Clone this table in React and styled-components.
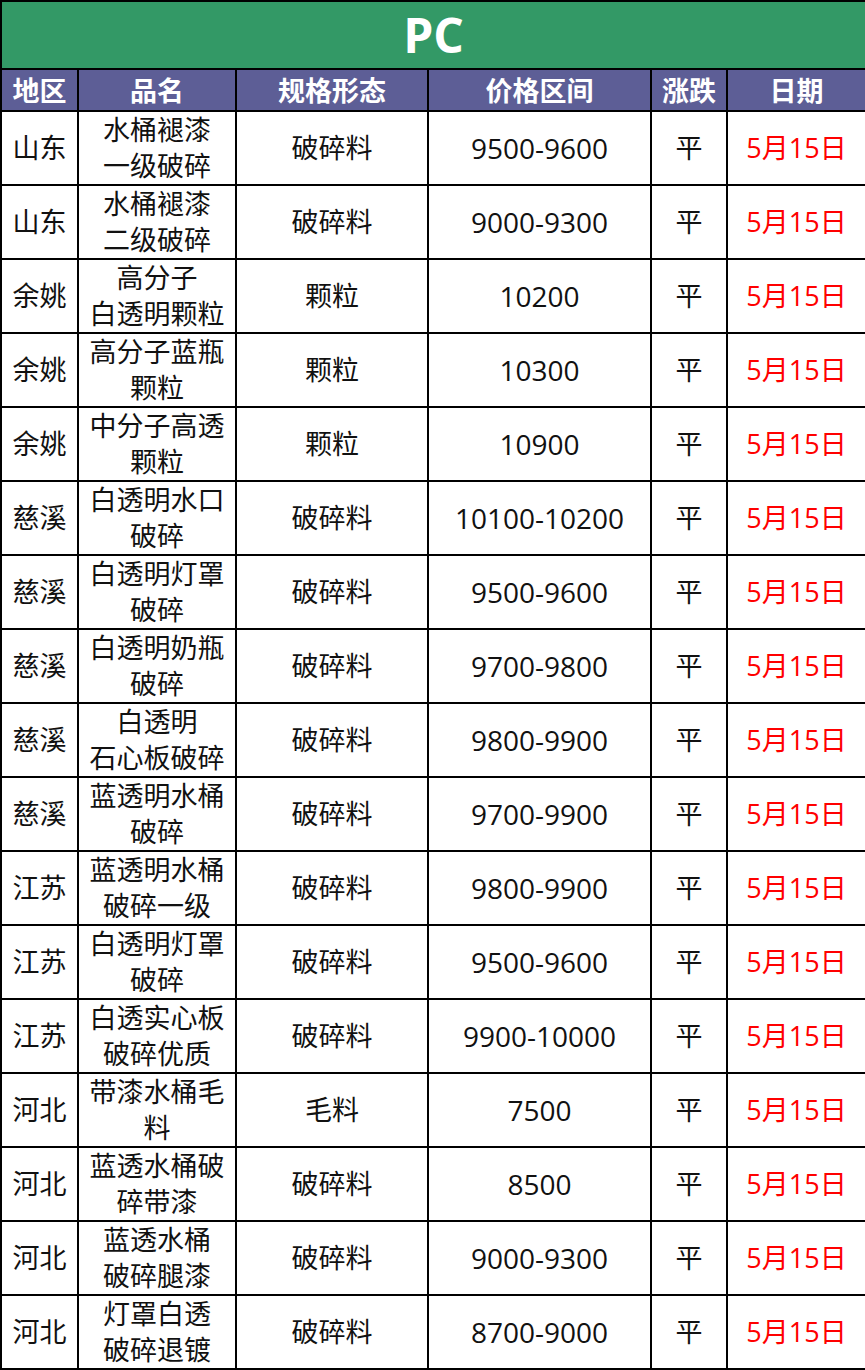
import React from "react";
import styled, { createGlobalStyle } from "styled-components";

const Global = createGlobalStyle`
  html, body { margin: 0; padding: 0; background: #ffffff; }
  body { font-family: "Open Sans", "Noto Sans CJK SC", sans-serif; }
`;

const Table = styled.table`
  width: 865px;
  table-layout: fixed;
  border-collapse: collapse;
  font-family: "Open Sans", "Noto Sans CJK SC", sans-serif;
`;

const Col = styled.col`
  width: ${(p) => p.$w}px;
`;

const TitleCell = styled.th`
  height: 66px;
  padding: 0;
  background: #339966;
  color: #ffffff;
  font-size: 48px;
  font-weight: 700;
  line-height: 1;
  text-align: center;
  border: 2px solid #000;
`;

const HeadCell = styled.th`
  height: 40px;
  padding: 0;
  background: #5d5e96;
  color: #ffffff;
  font-size: 27px;
  font-weight: 700;
  line-height: 1;
  text-align: center;
  border: 2px solid #000;
`;

const Cell = styled.td`
  height: 72px;
  padding: 0;
  color: ${(p) => (p.$red ? "#ff0000" : "#111111")};
  font-size: 27px;
  line-height: 36px;
  text-align: center;
  vertical-align: middle;
  border: 2px solid #000;
  white-space: nowrap;
  overflow: hidden;
`;

const Num = styled.span`
  font-size: 28px;
`;

const Line = styled.span`
  display: block;
`;

const rows = [
  ["山东", ["水桶褪漆", "一级破碎"], "破碎料", "9500-9600"],
  ["山东", ["水桶褪漆", "二级破碎"], "破碎料", "9000-9300"],
  ["余姚", ["高分子", "白透明颗粒"], "颗粒", "10200"],
  ["余姚", ["高分子蓝瓶", "颗粒"], "颗粒", "10300"],
  ["余姚", ["中分子高透", "颗粒"], "颗粒", "10900"],
  ["慈溪", ["白透明水口", "破碎"], "破碎料", "10100-10200"],
  ["慈溪", ["白透明灯罩", "破碎"], "破碎料", "9500-9600"],
  ["慈溪", ["白透明奶瓶", "破碎"], "破碎料", "9700-9800"],
  ["慈溪", ["白透明", "石心板破碎"], "破碎料", "9800-9900"],
  ["慈溪", ["蓝透明水桶", "破碎"], "破碎料", "9700-9900"],
  ["江苏", ["蓝透明水桶", "破碎一级"], "破碎料", "9800-9900"],
  ["江苏", ["白透明灯罩", "破碎"], "破碎料", "9500-9600"],
  ["江苏", ["白透实心板", "破碎优质"], "破碎料", "9900-10000"],
  ["河北", ["带漆水桶毛", "料"], "毛料", "7500"],
  ["河北", ["蓝透水桶破", "碎带漆"], "破碎料", "8500"],
  ["河北", ["蓝透水桶", "破碎腿漆"], "破碎料", "9000-9300"],
  ["河北", ["灯罩白透", "破碎退镀"], "破碎料", "8700-9000"],
];

const widths = [77, 158, 192, 223, 76, 139];
const heads = ["地区", "品名", "规格形态", "价格区间", "涨跌", "日期"];

export default function App() {
  return (
    <>
      <Global />
      <Table>
        <colgroup>
          {widths.map((w, i) => (
            <Col key={i} $w={w} />
          ))}
        </colgroup>
        <thead>
          <tr>
            <TitleCell colSpan={6}>PC</TitleCell>
          </tr>
          <tr>
            {heads.map((h) => (
              <HeadCell key={h}>{h}</HeadCell>
            ))}
          </tr>
        </thead>
        <tbody>
          {rows.map((r, i) => (
            <tr key={i}>
              <Cell>{r[0]}</Cell>
              <Cell>
                {r[1].map((l, j) => (
                  <Line key={j}>{l}</Line>
                ))}
              </Cell>
              <Cell>{r[2]}</Cell>
              <Cell>
                <Num>{r[3]}</Num>
              </Cell>
              <Cell>平</Cell>
              <Cell $red>5月15日</Cell>
            </tr>
          ))}
        </tbody>
      </Table>
    </>
  );
}
